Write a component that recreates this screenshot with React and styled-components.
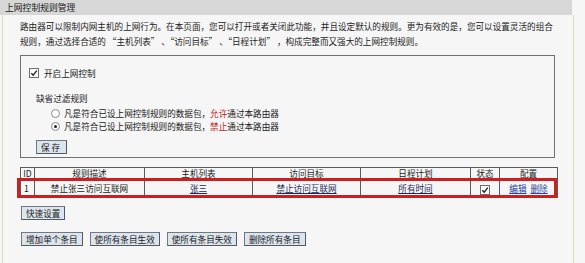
import React from 'react';
import styled, { createGlobalStyle } from 'styled-components';

const GlobalStyle = createGlobalStyle`
  html, body {
    margin: 0;
    padding: 0;
    background: #f5f5f5;
  }
  body {
    font-family: "Noto Sans CJK SC", "Liberation Sans", sans-serif;
    font-size: 8.6px;
    color: #1a1a1a;
  }
`;

const Page = styled.div`
  width: 585px;
  height: 263px;
  display: flex;
  flex-direction: column;
  background: #f6f6f6;
  overflow: hidden;
`;

const TitleBar = styled.div`
  width: 567px;
  height: 15px;
  line-height: 15px;
  padding-left: 5px;
  background: #d7d7d7;
  color: #222;
  font-size: 8.8px;
  flex-shrink: 0;
`;

const Body = styled.div`
  flex: 1;
  display: flex;
  flex-direction: column;
  width: 553px;
  margin-left: 2px;
  padding: 4px 0 0 17px;
  border-left: 1px solid #e4d8b8;
  border-right: 1px solid #e4d8b8;
`;

const Intro = styled.p`
  margin: 0;
  width: 540px;
  line-height: 15px;
  color: #222;
  white-space: nowrap;
`;

const Fieldset = styled.div`
  margin-top: 6px;
  width: 535px;
  height: 103px;
  border: 1px solid #707070;
  display: flex;
  flex-direction: column;
  padding: 11px 0 0 8px;
  box-sizing: border-box;
`;

const CheckRow = styled.label`
  display: flex;
  align-items: center;
  gap: 5px;
  height: 12px;
`;

const Box = styled.span`
  width: 8px;
  height: 8px;
  border: 1px solid #6c6c6c;
  background: #fff;
  display: inline-flex;
  align-items: center;
  justify-content: center;
  flex-shrink: 0;
`;

const SubTitle = styled.div`
  margin: 13px 0 0 7px;
  height: 12px;
  line-height: 12px;
`;

const RadioList = styled.div`
  display: flex;
  flex-direction: column;
  gap: 1px;
  margin: 3px 0 0 22px;
`;

const RadioRow = styled.label`
  display: flex;
  align-items: center;
  gap: 4px;
  height: 12px;
`;

const Radio = styled.span`
  width: 7px;
  height: 7px;
  border-radius: 50%;
  border: 1px solid #8a8a8a;
  background: #fff;
  display: inline-flex;
  align-items: center;
  justify-content: center;
  &::after {
    content: '';
    width: 3px;
    height: 3px;
    border-radius: 50%;
    background: ${p => (p.$on ? '#222' : 'transparent')};
  }
`;

const Red = styled.span`
  color: #c41a1a;
`;

const Button = styled.button`
  font-family: inherit;
  font-size: 8.6px;
  height: 14px;
  line-height: 12px;
  padding: 0 4px;
  background: #dce4ec;
  border: 1px solid #6d7987;
  border-right-color: #4e5a66;
  border-bottom-color: #4e5a66;
  color: #1a1a1a;
  letter-spacing: ${p => p.$spaced ? '2px' : '0'};
  cursor: pointer;
`;

const SaveWrap = styled.div`
  margin: 8px 0 0 7px;
`;

const TableWrap = styled.div`
  position: relative;
  margin-top: 9px;
  width: 537px;
`;

const Table = styled.table`
  width: 537px;
  border-collapse: collapse;
  table-layout: fixed;
  th, td {
    border: 1px solid #5a5a5a;
    text-align: center;
    font-weight: normal;
    padding: 0;
    white-space: nowrap;
  }
  th {
    height: 11px;
    line-height: 11px;
  }
  td {
    height: 17px;
    line-height: 17px;
  }
`;

const Cell = styled.td`
  text-align: ${p => p.$left ? 'left' : 'center'} !important;
  padding-left: ${p => p.$left ? '3px' : '0'} !important;
`;

const Link = styled.a`
  color: ${p => p.$blue ? '#2a43a0' : '#1c2a55'};
  text-decoration: underline;
  margin: 0 2px;
`;

const Highlight = styled.div`
  position: absolute;
  left: -3px;
  right: 0;
  top: 11px;
  height: 20px;
  border: 3px solid #cc1f1f;
  box-sizing: border-box;
  pointer-events: none;
`;

const QuickRow = styled.div`
  margin-top: 8px;
  margin-left: 1px;
`;

const ButtonRow = styled.div`
  display: flex;
  gap: 7px;
  margin-top: 12px;
  margin-left: 1px;
`;

const Tick = () => (
  <svg width="8" height="8" viewBox="0 0 8 8">
    <path d="M1.3 4.2 L3.2 6.2 L6.8 1.6" fill="none" stroke="#222" strokeWidth="1.4" />
  </svg>
);

export default function App() {
  return (
    <>
      <GlobalStyle />
      <Page>
        <TitleBar>上网控制规则管理</TitleBar>
        <Body>
          <Intro>
            路由器可以限制内网主机的上网行为。在本页面，您可以打开或者关闭此功能，并且设定默认的规则。更为有效的是，您可以设置灵活的组合
            <br />
            规则，通过选择合适的 “主机列表” 、“访问目标” 、“日程计划” ，构成完整而又强大的上网控制规则。
          </Intro>
          <Fieldset>
            <CheckRow>
              <Box><Tick /></Box>
              <span>开启上网控制</span>
            </CheckRow>
            <SubTitle>缺省过滤规则</SubTitle>
            <RadioList>
              <RadioRow>
                <Radio />
                <span>凡是符合已设上网控制规则的数据包，<Red>允许</Red>通过本路由器</span>
              </RadioRow>
              <RadioRow>
                <Radio $on />
                <span>凡是符合已设上网控制规则的数据包，<Red>禁止</Red>通过本路由器</span>
              </RadioRow>
            </RadioList>
            <SaveWrap>
              <Button $spaced>保存</Button>
            </SaveWrap>
          </Fieldset>
          <TableWrap>
            <Table>
              <colgroup>
                <col style={{ width: 14 }} />
                <col style={{ width: 110 }} />
                <col style={{ width: 108 }} />
                <col style={{ width: 108 }} />
                <col style={{ width: 110 }} />
                <col style={{ width: 29 }} />
                <col style={{ width: 58 }} />
              </colgroup>
              <thead>
                <tr>
                  <th>ID</th>
                  <th>规则描述</th>
                  <th>主机列表</th>
                  <th>访问目标</th>
                  <th>日程计划</th>
                  <th>状态</th>
                  <th>配置</th>
                </tr>
              </thead>
              <tbody>
                <tr>
                  <Cell $left>1</Cell>
                  <Cell>禁止张三访问互联网</Cell>
                  <Cell><Link>张三</Link></Cell>
                  <Cell><Link>禁止访问互联网</Link></Cell>
                  <Cell><Link>所有时间</Link></Cell>
                  <Cell><Box style={{ verticalAlign: 'middle' }}><Tick /></Box></Cell>
                  <Cell><Link $blue>编辑</Link><Link $blue>删除</Link></Cell>
                </tr>
              </tbody>
            </Table>
            <Highlight />
          </TableWrap>
          <QuickRow>
            <Button>快速设置</Button>
          </QuickRow>
          <ButtonRow>
            <Button>增加单个条目</Button>
            <Button>使所有条目生效</Button>
            <Button>使所有条目失效</Button>
            <Button>删除所有条目</Button>
          </ButtonRow>
        </Body>
      </Page>
    </>
  );
}
